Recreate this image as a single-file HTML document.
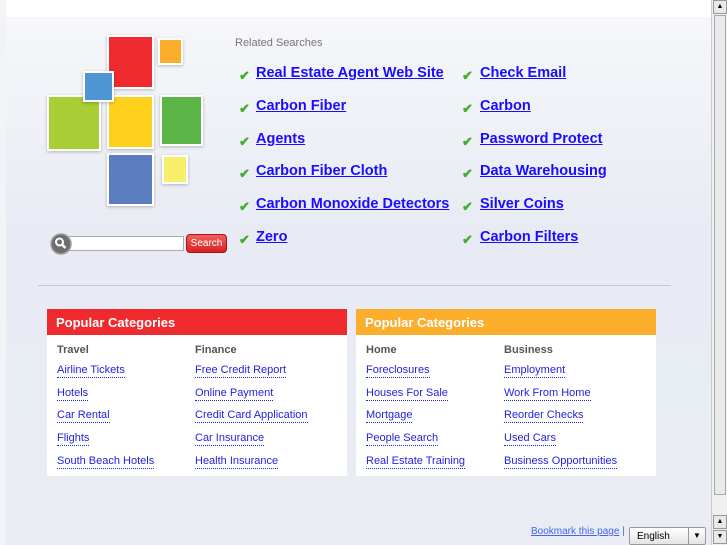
<!DOCTYPE html>
<html><head><style>
*{margin:0;padding:0;box-sizing:border-box}
body{width:727px;height:545px;overflow:hidden;font-family:"Liberation Sans",sans-serif;background:#fff;position:relative}
#bg{position:absolute;left:6px;top:17px;width:705px;height:528px;background:linear-gradient(#f6f7fa,#e8ebf3 40%,#e9ecf3)}
#lb{position:absolute;left:0;top:0;width:6px;height:545px;background:#f2f3f6}
.sq{position:absolute;border:2px solid #fff;box-shadow:0 1px 3px rgba(0,0,0,.25)}
.abs{position:absolute}
.rs{position:absolute;font-size:11px;color:#777}
.lk{position:absolute;font-size:14.5px;font-weight:bold;color:#1a0dff;text-decoration:underline;white-space:nowrap}
.ck{position:absolute;color:#3fae2a;font-size:13px;font-weight:bold}
.box{position:absolute;top:309px;width:300px;height:167px;background:#fff}
.bh{height:26px;color:#fff;font-size:13px;font-weight:bold;padding:6px 0 0 9px}
.col{position:absolute;top:34px;font-size:11px}
.col b{display:block;color:#555;margin-bottom:6px;height:14px;padding-top:1px}
.col a{display:inline-block;color:#2222dd;text-decoration:none;border-bottom:1px dotted #2222dd;line-height:14px}
.col div{height:22.7px}
#sb{position:absolute;left:711px;top:0;width:16px;height:545px;background:#f0f0f0;border-left:1px solid #ccc}
</style></head><body>
<div id="lb"></div><div id="bg"></div>
<div class="sq" style="left:107px;top:35px;width:47px;height:54px;background:#ee2a2e"></div>
<div class="sq" style="left:158px;top:38px;width:25px;height:27px;background:#fbad2c"></div>
<div class="sq" style="left:47px;top:95px;width:54px;height:56px;background:#a9cd34"></div>
<div class="sq" style="left:107px;top:95px;width:47px;height:54px;background:#fdd01b"></div>
<div class="sq" style="left:160px;top:95px;width:43px;height:51px;background:#5cb547"></div>
<div class="sq" style="left:83px;top:71px;width:31px;height:31px;background:#4e96d3"></div>
<div class="sq" style="left:107px;top:153px;width:47px;height:53px;background:#5b7cc0"></div>
<div class="sq" style="left:162px;top:155px;width:26px;height:29px;background:#f7ee6a"></div>
<div class="abs" style="left:66px;top:236px;width:118px;height:15px;background:#fff;border:1px solid #aaa"></div>
<svg class="abs" style="left:50px;top:233px" width="22" height="22" viewBox="0 0 22 22"><circle cx="11" cy="11" r="10" fill="#6e6e6e" stroke="#a0a0a0" stroke-width="1.5"/><circle cx="9.5" cy="9" r="3.5" fill="none" stroke="#fff" stroke-width="2"/><line x1="12" y1="11.5" x2="15.5" y2="15" stroke="#fff" stroke-width="2.5"/></svg>
<div class="abs" style="left:186px;top:234px;width:41px;height:19px;border-radius:4px;background:linear-gradient(#f06060,#d82020);color:#fff;font-size:10px;text-align:center;line-height:17px;border:1px solid #b01010">Search</div>
<div class="rs" style="left:235px;top:37px">Related Searches</div>
<span class="ck" style="left:239px;top:68px">✔</span><a class="lk" style="left:256px;top:65px">Real Estate Agent Web Site</a>
<span class="ck" style="left:239px;top:101px">✔</span><a class="lk" style="left:256px;top:98px">Carbon Fiber</a>
<span class="ck" style="left:239px;top:134px">✔</span><a class="lk" style="left:256px;top:131px">Agents</a>
<span class="ck" style="left:239px;top:166px">✔</span><a class="lk" style="left:256px;top:163px">Carbon Fiber Cloth</a>
<span class="ck" style="left:239px;top:199px">✔</span><a class="lk" style="left:256px;top:196px">Carbon Monoxide Detectors</a>
<span class="ck" style="left:239px;top:232px">✔</span><a class="lk" style="left:256px;top:229px">Zero</a>
<span class="ck" style="left:462px;top:68px">✔</span><a class="lk" style="left:480px;top:65px">Check Email</a>
<span class="ck" style="left:462px;top:101px">✔</span><a class="lk" style="left:480px;top:98px">Carbon</a>
<span class="ck" style="left:462px;top:134px">✔</span><a class="lk" style="left:480px;top:131px">Password Protect</a>
<span class="ck" style="left:462px;top:166px">✔</span><a class="lk" style="left:480px;top:163px">Data Warehousing</a>
<span class="ck" style="left:462px;top:199px">✔</span><a class="lk" style="left:480px;top:196px">Silver Coins</a>
<span class="ck" style="left:462px;top:232px">✔</span><a class="lk" style="left:480px;top:229px">Carbon Filters</a>
<div class="abs" style="left:38px;top:285px;width:633px;height:1px;background:#c8c8c8"></div>
<div class="box" style="left:47px"><div class="bh" style="background:#ee2a2e">Popular Categories</div>
<div class="col" style="left:10px"><b>Travel</b><div><a>Airline Tickets</a></div><div><a>Hotels</a></div><div><a>Car Rental</a></div><div><a>Flights</a></div><div><a>South Beach Hotels</a></div></div>
<div class="col" style="left:148px"><b>Finance</b><div><a>Free Credit Report</a></div><div><a>Online Payment</a></div><div><a>Credit Card Application</a></div><div><a>Car Insurance</a></div><div><a>Health Insurance</a></div></div></div>
<div class="box" style="left:356px"><div class="bh" style="background:#fbad2c">Popular Categories</div>
<div class="col" style="left:10px"><b>Home</b><div><a>Foreclosures</a></div><div><a>Houses For Sale</a></div><div><a>Mortgage</a></div><div><a>People Search</a></div><div><a>Real Estate Training</a></div></div>
<div class="col" style="left:148px"><b>Business</b><div><a>Employment</a></div><div><a>Work From Home</a></div><div><a>Reorder Checks</a></div><div><a>Used Cars</a></div><div><a>Business Opportunities</a></div></div></div>
<div class="abs" style="left:531px;top:526px;font-size:10px;color:#4466ee"><span style="text-decoration:underline">Bookmark this page</span> |</div>
<div class="abs" style="left:629px;top:527px;width:77px;height:18px;border:1px solid #999;border-radius:2px;background:linear-gradient(#fff,#e4e4e4);font-size:10px;padding:3px 0 0 7px">English<span style="position:absolute;right:0;top:0;width:17px;height:16px;border-left:1px solid #999;text-align:center;font-size:8px;line-height:16px">▼</span></div>
<div id="sb"><div style="position:absolute;top:0;left:1px;width:14px;height:14px;background:#e8e8e8;border:1px solid #999;font-size:7px;text-align:center;line-height:12px">▲</div>
<div style="position:absolute;top:15px;left:2px;width:12px;height:480px;background:#e8eaee;border:1px solid #aaa"></div>
<div style="position:absolute;top:515px;left:1px;width:14px;height:14px;background:#e8e8e8;border:1px solid #999;font-size:7px;text-align:center;line-height:12px">▲</div>
<div style="position:absolute;top:530px;left:1px;width:14px;height:14px;background:#e8e8e8;border:1px solid #999;font-size:7px;text-align:center;line-height:12px">▼</div></div>
</body></html>
